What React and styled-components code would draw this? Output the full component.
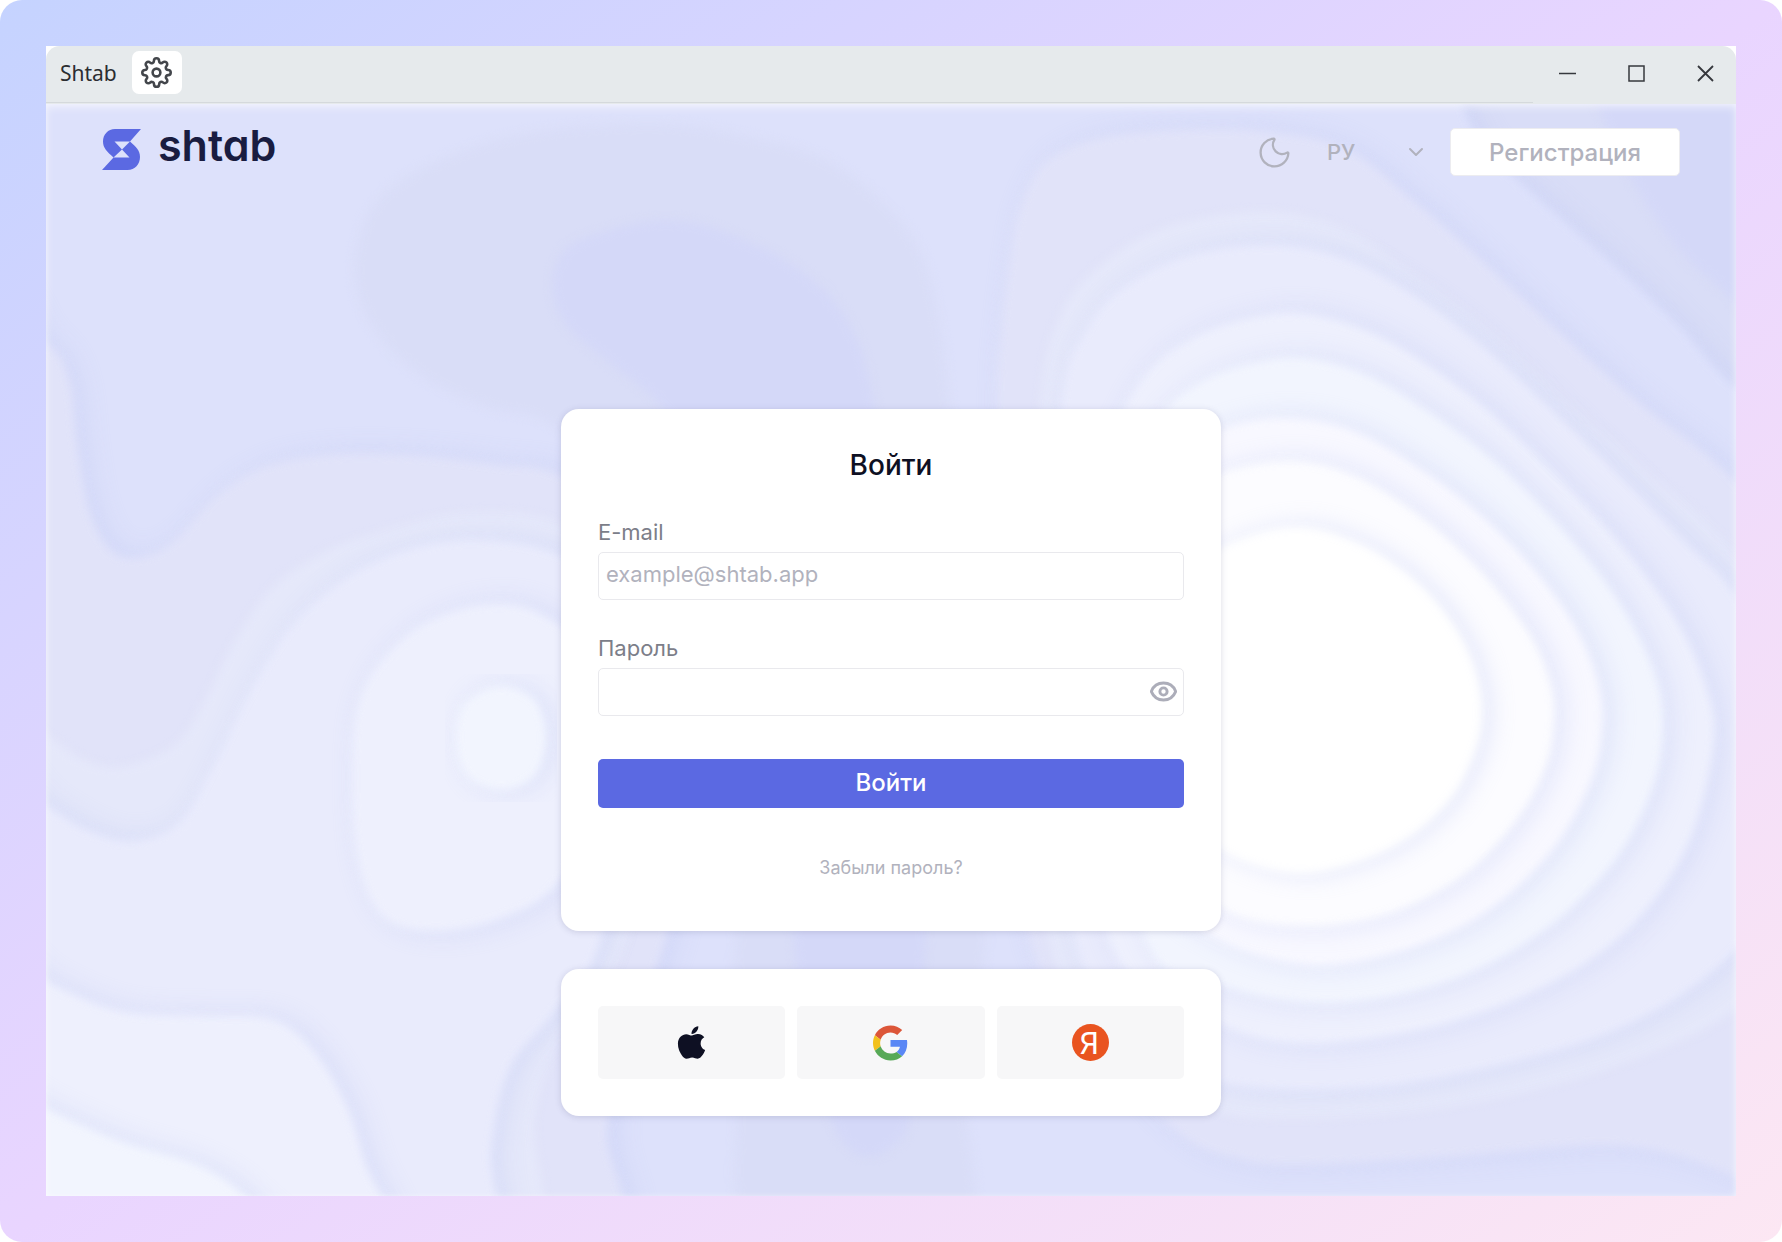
import { useState } from "react";
import styled, { createGlobalStyle } from "styled-components";
import { FiSettings } from "react-icons/fi";
import { FaApple } from "react-icons/fa";
import { ChevronDown, Eye, Moon } from "lucide-react";

const GlobalStyle = createGlobalStyle`
  * {
    box-sizing: border-box;
  }

  body {
    margin: 0;
    background: #fff;
    font-family: Inter, "Liberation Sans", sans-serif;
  }

  button, input, select {
    font-family: inherit;
  }
`;

const Frame = styled.div`
  display: flex;
  min-height: 100vh;
  padding: 46px;
  border-radius: 22px;
  background: linear-gradient(to bottom right, #c5d3ff 0%, #e9d5ff 50%, #fce7f3 100%);
`;

const Window = styled.div`
  display: flex;
  flex: 1;
  flex-direction: column;
  background: #fff;
`;

const TitleBar = styled.div`
  display: flex;
  height: 58px;
  border-radius: 14px 14px 0 0;
  background: #e6eaec;
`;

const TitleLeft = styled.div`
  display: flex;
  flex: 1;
  align-items: center;
  gap: 15px;
  height: 57px;
  padding: 0 0 4px 14px;
  border-bottom: 1px solid #d5d9dc;
`;

const AppName = styled.span`
  padding-top: 2px;
  color: #2b2d31;
  font-family: "Noto Sans", sans-serif;
  font-size: 21px;
`;

const SettingsButton = styled.button`
  display: flex;
  align-items: center;
  justify-content: center;
  width: 50px;
  height: 43px;
  padding: 0;
  border: 0;
  border-radius: 7px;
  background: #fff;
  color: #43464b;
`;

const WindowControls = styled.div`
  display: flex;
  align-items: center;
  gap: 36px;
  height: 54px;
  padding: 0 14px 0 18px;
`;

const ControlButton = styled.button`
  display: flex;
  align-items: center;
  justify-content: center;
  width: 33px;
  height: 33px;
  padding: 0;
  border: 0;
  background: none;
  color: #36383d;
`;

const Main = styled.main`
  position: relative;
  display: flex;
  flex: 1;
  flex-direction: column;
  overflow: hidden;
`;

const Backdrop = styled.svg`
  position: absolute;
  inset: 0;
  width: 100%;
  height: 100%;
`;

// soft fade along the edges of the backdrop
const EdgeFade = styled.div`
  position: absolute;
  inset: 0;
  box-shadow: inset 0 3px 8px rgba(255, 255, 255, 0.6),
    inset 0 0 4px rgba(255, 255, 255, 0.3);
`;

const Header = styled.header`
  position: relative;
  display: flex;
  align-items: flex-start;
  justify-content: space-between;
  padding: 24px 56px;
`;

const Logo = styled.a`
  display: flex;
  align-items: center;
  gap: 17px;
  color: #191c40;
  text-decoration: none;
`;

const LogoText = styled.span`
  padding-bottom: 8px;
  font-size: 43px;
  font-weight: 600;
  line-height: 34px;
  font-feature-settings: "cv11";
`;

const HeaderActions = styled.div`
  display: flex;
  align-items: center;
`;

const ThemeButton = styled.button`
  display: flex;
  margin-right: 34px;
  padding: 0;
  border: 0;
  background: none;
  color: #b1b2bd;
`;

const Language = styled.label`
  display: grid;
  align-items: center;
  width: 101px;
  margin-right: 22px;
  color: #b1b2bd;

  > * {
    grid-area: 1 / 1;
  }

  svg {
    justify-self: end;
    pointer-events: none;
  }
`;

const LanguageSelect = styled.select`
  width: 100%;
  padding: 0;
  border: 0;
  appearance: none;
  background: none;
  color: #b1b2bd;
  font-size: 22px;
  font-weight: 500;
`;

const RegisterButton = styled.button`
  width: 230px;
  height: 48px;
  padding: 0;
  border: 1px solid #ececf0;
  border-radius: 5px;
  background: #fff;
  color: #b1b2bd;
  font-size: 24px;
  font-weight: 500;
`;

const Auth = styled.div`
  position: relative;
  display: flex;
  flex-direction: column;
  align-items: center;
  gap: 38px;
  padding: 209px 24px 79px;
`;

const Card = styled.section`
  width: 100%;
  max-width: 660px;
  padding: ${(p) => (p.$compact ? "37px" : "38px 37px 49px")};
  border-radius: 18px;
  background: #fff;
  box-shadow: 0 1px 6px rgba(90, 90, 130, 0.22);
`;

const Title = styled.h1`
  margin: 0 0 34px;
  color: #0e1023;
  font-size: 28px;
  font-weight: 500;
  line-height: 36px;
  text-align: center;
`;

const Field = styled.div`
  margin-bottom: ${(p) => (p.$last ? "43px" : "33px")};
`;

const Label = styled.label`
  display: block;
  margin-bottom: 5px;
  color: #7c7e89;
  font-size: 22px;
  line-height: 30px;
`;

const InputBox = styled.div`
  display: flex;
  align-items: center;
  height: 48px;
  padding: 0 5px 0 7px;
  border: 1px solid #e9e9ed;
  border-radius: 5px;
`;

const Input = styled.input`
  flex: 1;
  min-width: 0;
  padding: 0 0 4px;
  border: 0;
  outline: 0;
  background: none;
  color: #0e1023;
  font-size: 22px;

  &::placeholder {
    color: #b1b2bd;
  }
`;

const EyeButton = styled.button`
  display: flex;
  padding: 0 0 2px;
  border: 0;
  background: none;
  color: #acadb9;
`;

const SubmitButton = styled.button`
  display: block;
  width: 100%;
  height: 49px;
  padding: 0 0 2px;
  border: 0;
  border-radius: 5px;
  background: #5b69e2;
  color: #fff;
  font-size: 24px;
  font-weight: 500;
`;

const ForgotLink = styled.a`
  display: block;
  width: fit-content;
  margin: 46px auto 0;
  color: #b1b2bd;
  font-size: 18px;
  line-height: 28px;
  text-decoration: none;
`;

const Providers = styled.div`
  display: grid;
  grid-template-columns: repeat(3, 1fr);
  gap: 12px;
`;

const ProviderButton = styled.button`
  display: flex;
  align-items: center;
  justify-content: center;
  height: 73px;
  padding: 0;
  border: 0;
  border-radius: 5px;
  background: #f7f7f8;
  color: #0e1023;
`;

// smooth curve through a flat list of x, y pairs
function curve(flat) {
  const pts = [];
  for (let i = 0; i < flat.length; i += 2) pts.push([flat[i], flat[i + 1]]);
  const n = pts.length;
  let d = `M${pts[0]}`;
  for (let i = 0; i < n; i++) {
    const [a, b, c, e] = [-1, 0, 1, 2].map((k) => pts[(i + k + n) % n]);
    d += `C${b[0] + (c[0] - a[0]) / 6},${b[1] + (c[1] - a[1]) / 6} `;
    d += `${c[0] - (e[0] - b[0]) / 6},${c[1] - (e[1] - b[1]) / 6} ${c}`;
  }
  return d + "Z";
}

// [fill, filter, points], painted from the back to the front
const shapes = [
  ["#d4d8f8", "soft", [1590, 60, 1600, 111, 1633, 182, 1679, 250, 1725, 292, 1800, 360, 1850, 200, 1800, 60]],
  ["#dde1fb", "raised", [-100, 0, 700, 0, 1430, 0, 1455, 80, 1478, 137, 1518, 179, 1602, 253, 1679, 325, 1736, 387, 1850, 480, 1850, 1300, 700, 1300, -100, 1300]],
  ["#d9ddf7", "soft", [355, 260, 380, 198, 450, 156, 540, 131, 660, 124, 740, 135, 820, 157, 880, 200, 920, 252, 940, 326, 950, 409, 970, 600, 975, 800, 985, 950, 965, 1080, 960, 1250, 760, 1250, 735, 1100, 735, 950, 740, 760, 720, 560, 562, 431, 490, 408, 420, 375, 368, 320]],
  ["#d4d8f8", "soft", [552, 286, 565, 250, 600, 233, 660, 220, 720, 230, 800, 270, 850, 325, 875, 409, 900, 600, 920, 850, 925, 950, 912, 1110, 890, 1148, 868, 1156, 846, 1145, 825, 1100, 795, 950, 790, 700, 740, 500, 665, 409, 600, 355, 566, 325]],
  ["#e1e3f9", "raised", [-40, 310, 46, 343, 70, 380, 78, 445, 90, 510, 110, 548, 135, 557, 170, 543, 220, 492, 270, 464, 340, 453, 420, 455, 500, 464, 562, 475, 660, 540, 700, 700, 685, 850, 665, 945, 630, 1040, 608, 1130, 606, 1260, 300, 1300, -40, 1260]],
  ["#e5e8fa", "soft", [-40, 680, 46, 735, 80, 758, 120, 767, 175, 745, 205, 700, 230, 650, 270, 590, 320, 555, 365, 537, 461, 514, 562, 525, 640, 600, 665, 750, 625, 945, 560, 1040, 534, 1120, 528, 1260, 300, 1300, -40, 1260]],
  ["#e9ebfc", "raised", [-40, 760, 46, 805, 90, 830, 135, 840, 180, 820, 215, 760, 255, 680, 300, 615, 370, 563, 461, 539, 562, 555, 620, 620, 640, 750, 600, 945, 553, 1015, 510, 1070, 492, 1150, 486, 1260, 300, 1300, -40, 1260]],
  ["#eef0fd", "raised", [352, 740, 362, 690, 385, 655, 423, 623, 480, 604, 537, 611, 590, 660, 600, 780, 562, 880, 500, 920, 430, 932, 380, 915, 355, 850]],
  ["#f2f5fe", "raised", [455, 740, 464, 703, 500, 685, 536, 700, 547, 740, 534, 778, 500, 791, 466, 776]],
  ["#eef0fd", "raised", [-40, 930, 46, 980, 120, 1010, 200, 1015, 270, 1018, 310, 1045, 345, 1100, 365, 1160, 390, 1260, 200, 1300, -40, 1260]],
  ["#f2f5fe", "raised", [-40, 1070, 46, 1108, 120, 1140, 200, 1165, 250, 1200, 290, 1260, 100, 1300, -40, 1260]],
  ["#e1e3f9", "raised", [996, 409, 1000, 330, 1010, 250, 1020, 205, 1045, 161, 1100, 137, 1180, 129, 1260, 130, 1345, 147, 1418, 203, 1472, 250, 1564, 335, 1640, 402, 1736, 480, 1830, 600, 1850, 1000, 1800, 1220, 1733, 1177, 1621, 1147, 1449, 1158, 1300, 1166, 1238, 1160, 1180, 1135, 1100, 1050, 1030, 945, 1000, 700]],
  ["#e5e8fa", "soft", [1040, 409, 1060, 318, 1100, 266, 1170, 226, 1271, 212, 1350, 232, 1410, 272, 1487, 329, 1564, 400, 1640, 465, 1736, 555, 1820, 700, 1810, 930, 1733, 1012, 1602, 1070, 1449, 1106, 1295, 1118, 1200, 1105, 1110, 1040, 1050, 945, 1025, 700]],
  ["#e9ebfc", "raised", [1060, 409, 1085, 330, 1125, 285, 1190, 254, 1271, 244, 1344, 257, 1416, 295, 1489, 350, 1586, 441, 1683, 538, 1740, 600, 1790, 720, 1790, 860, 1733, 954, 1640, 1020, 1525, 1060, 1372, 1088, 1218, 1083, 1130, 1030, 1075, 945, 1045, 700]],
  ["#eef0fd", "raised", [1095, 500, 1108, 445, 1126, 402, 1148, 370, 1178, 345, 1226, 323, 1295, 312, 1368, 330, 1441, 373, 1513, 432, 1610, 531, 1673, 613, 1705, 680, 1715, 740, 1693, 835, 1649, 908, 1592, 960, 1510, 1003, 1410, 1033, 1295, 1044, 1210, 1020, 1110, 945, 1085, 700]],
  ["#f2f5fe", "raised", [1120, 520, 1136, 455, 1164, 410, 1200, 381, 1248, 363, 1303, 357, 1365, 373, 1430, 411, 1496, 461, 1561, 526, 1618, 598, 1655, 671, 1664, 728, 1653, 790, 1615, 862, 1545, 931, 1449, 982, 1333, 1004, 1226, 988, 1145, 940, 1110, 700]],
  ["#f8f8ff", "raised", [1130, 520, 1170, 455, 1224, 427, 1285, 417, 1354, 430, 1427, 472, 1488, 520, 1542, 577, 1580, 633, 1600, 686, 1603, 730, 1592, 782, 1553, 851, 1488, 912, 1408, 950, 1312, 966, 1217, 940, 1150, 880, 1110, 700]],
  ["#fcfcff", "raised", [1130, 560, 1170, 500, 1224, 471, 1293, 460, 1358, 476, 1427, 520, 1484, 573, 1530, 633, 1551, 681, 1555, 722, 1546, 769, 1515, 824, 1461, 878, 1385, 916, 1301, 927, 1224, 911, 1150, 850, 1110, 700]],
  ["#ffffff", "raised", [1130, 640, 1165, 585, 1224, 545, 1293, 526, 1354, 540, 1408, 573, 1448, 615, 1474, 663, 1483, 713, 1474, 757, 1450, 801, 1408, 839, 1354, 864, 1293, 874, 1224, 853, 1160, 800, 1120, 720]],
];

const Waves = () => (
  <Backdrop viewBox="46 104 1690 1092" preserveAspectRatio="none" aria-hidden="true">
    <defs>
      <filter id="soft" colorInterpolationFilters="sRGB">
        <feGaussianBlur stdDeviation="5" />
      </filter>
      <filter id="raised" colorInterpolationFilters="sRGB">
        <feGaussianBlur in="SourceGraphic" stdDeviation="5" result="shape" />
        <feDropShadow in="shape" dx="7" dy="0" stdDeviation="12" floodColor="#bcc5f2" floodOpacity="0.42" />
      </filter>
    </defs>
    <rect x="46" y="104" width="1690" height="1092" fill="#d9ddf7" />
    {shapes.map(([fill, filter, pts], i) => (
      <path key={i} d={curve(pts)} fill={fill} filter={`url(#${filter})`} />
    ))}
  </Backdrop>
);

const LogoMark = () => (
  <svg width="39" height="41" viewBox="0 0 39 41" aria-hidden="true">
    <path
      fill="#5b69e2"
      fillRule="evenodd"
      d="M13 0H39L28 12.500C34 18 38 21 38 28C38 35 33 41 25.500 41H0L11.500 28.500C5 22.500 1 19 1 12.500C1 5.500 6 0 13 0ZM12.500 12.500L20 20.500L11.500 28.500H27.500L20 20.500L28 12.500Z"
    />
  </svg>
);

const GoogleIcon = () => (
  <svg width="35" height="36" viewBox="0 0 48 48" aria-hidden="true">
    <path fill="#dc5639" d="M24 9.500c3.540 0 6.710 1.220 9.210 3.600l6.850-6.850C35.900 2.380 30.470 0 24 0 14.620 0 6.510 5.380 2.560 13.220l7.980 6.190C12.430 13.720 17.740 9.500 24 9.500z" />
    <path fill="#5a87f5" d="M46.980 24.550c0-1.570-.15-3.090-.38-4.550H24v9.020h12.940c-.58 2.960-2.260 5.480-4.780 7.180l7.730 6c4.510-4.180 7.090-10.360 7.090-17.650z" />
    <path fill="#f2c11c" d="M10.530 28.590c-.48-1.450-.76-2.990-.76-4.590s.27-3.140.76-4.590l-7.980-6.190C.92 16.460 0 20.120 0 24c0 3.880.92 7.540 2.560 10.780l7.970-6.190z" />
    <path fill="#57a957" d="M24 48c6.480 0 11.930-2.130 15.890-5.810l-7.730-6c-2.150 1.450-4.920 2.300-8.160 2.300-6.260 0-11.570-4.220-13.470-9.910l-7.980 6.190C6.510 42.620 14.620 48 24 48z" />
  </svg>
);

const YandexIcon = () => (
  <svg width="37" height="37" viewBox="0 0 37 37" aria-hidden="true">
    <circle cx="18.500" cy="18.500" r="18.500" fill="#e95420" />
    <text x="17" y="30" fill="#fff" fontFamily="Roboto, sans-serif" fontSize="31" textAnchor="middle">
      Я
    </text>
  </svg>
);

export default function App() {
  const [showPassword, setShowPassword] = useState(false);

  return (
    <>
      <GlobalStyle />
      <Frame>
        <Window>
          <TitleBar>
            <TitleLeft>
              <AppName>Shtab</AppName>
              <SettingsButton aria-label="Настройки">
                <FiSettings size={31} />
              </SettingsButton>
            </TitleLeft>
            <WindowControls>
              <ControlButton aria-label="Свернуть">
                <svg width="17" height="17" stroke="currentColor" strokeWidth="1.500">
                  <path d="M0 8.500H17" />
                </svg>
              </ControlButton>
              <ControlButton aria-label="Развернуть">
                <svg width="17" height="17" fill="none" stroke="currentColor" strokeWidth="1.500">
                  <rect x="1" y="1" width="15" height="15" />
                </svg>
              </ControlButton>
              <ControlButton aria-label="Закрыть">
                <svg width="17" height="17" stroke="currentColor" strokeWidth="1.800">
                  <path d="M1 1L16 16M16 1L1 16" />
                </svg>
              </ControlButton>
            </WindowControls>
          </TitleBar>
          <Main>
            <Waves />
            <EdgeFade />
            <Header>
              <Logo href="#">
                <LogoMark />
                <LogoText>shtab</LogoText>
              </Logo>
              <HeaderActions>
                <ThemeButton aria-label="Тёмная тема">
                  <Moon size={37} strokeWidth={1.5} />
                </ThemeButton>
                <Language>
                  <LanguageSelect aria-label="Язык" defaultValue="ru">
                    <option value="ru">РУ</option>
                  </LanguageSelect>
                  <ChevronDown size={24} />
                </Language>
                <RegisterButton>Регистрация</RegisterButton>
              </HeaderActions>
            </Header>
            <Auth>
              <Card as="form" onSubmit={(e) => e.preventDefault()}>
                <Title>Войти</Title>
                <Field>
                  <Label htmlFor="email">E-mail</Label>
                  <InputBox>
                    <Input id="email" type="email" placeholder="example@shtab.app" />
                  </InputBox>
                </Field>
                <Field $last>
                  <Label htmlFor="password">Пароль</Label>
                  <InputBox>
                    <Input id="password" type={showPassword ? "text" : "password"} />
                    <EyeButton
                      type="button"
                      aria-label="Показать пароль"
                      onClick={() => setShowPassword(!showPassword)}
                    >
                      <Eye size={29} strokeWidth={2.4} />
                    </EyeButton>
                  </InputBox>
                </Field>
                <SubmitButton>Войти</SubmitButton>
                <ForgotLink href="#">Забыли пароль?</ForgotLink>
              </Card>
              <Card $compact>
                <Providers>
                  <ProviderButton aria-label="Apple">
                    <FaApple size={37} />
                  </ProviderButton>
                  <ProviderButton aria-label="Google">
                    <GoogleIcon />
                  </ProviderButton>
                  <ProviderButton aria-label="Яндекс">
                    <YandexIcon />
                  </ProviderButton>
                </Providers>
              </Card>
            </Auth>
          </Main>
        </Window>
      </Frame>
    </>
  );
}
